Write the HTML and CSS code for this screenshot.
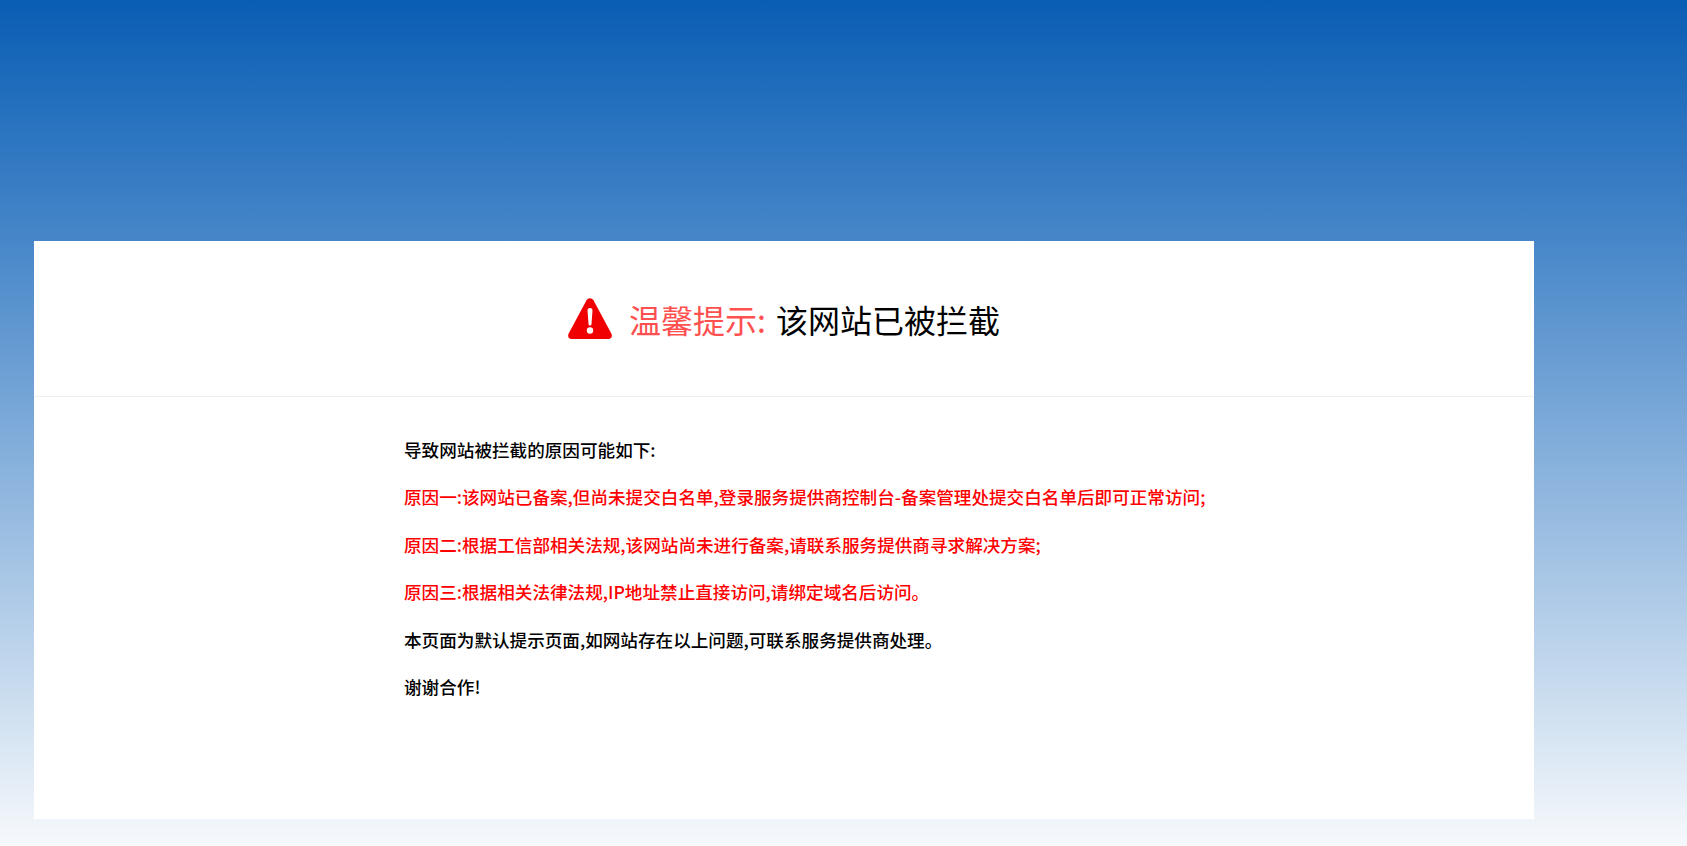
FILE: index.html
```html
<!DOCTYPE html>
<html lang="zh-CN">
<head>
<meta charset="utf-8">
<title>温馨提示</title>
<link rel="stylesheet" href="styles.css">
</head>
<body>
<main class="card">
  <header class="head">
    <svg class="warn" viewBox="0 0 44 41" width="44" height="41" aria-hidden="true">
      <path fill="#f00000" d="M18.500 2.200a4 4 0 0 1 7 0l17.800 33.300c1.300 2.600.2 5.500-2.800 5.500H3.500C.5 41-.6 38.100.7 35.500z"/>
      <path fill="#fff" d="M19.500 12.500a2.500 2.500 0 1 1 5 0l-1 13.500a1.500 1.500 0 0 1-3 0z"/>
      <circle fill="#fff" cx="22" cy="32.500" r="3.200"/>
    </svg>
    <h1 class="title"><span class="hint">温馨提示:</span><span class="msg">该网站已被拦截</span></h1>
  </header>
  <section class="body">
    <p>导致网站被拦截的原因可能如下:</p>
    <p class="red">原因一:该网站已备案,但尚未提交白名单,登录服务提供商控制台-备案管理处提交白名单后即可正常访问;</p>
    <p class="red">原因二:根据工信部相关法规,该网站尚未进行备案,请联系服务提供商寻求解决方案;</p>
    <p class="red">原因三:根据相关法律法规,IP地址禁止直接访问,请绑定域名后访问。</p>
    <p>本页面为默认提示页面,如网站存在以上问题,可联系服务提供商处理。</p>
    <p>谢谢合作!</p>
  </section>
</main>
</body>
</html>
```
FILE: styles.css
```css
html, body { margin: 0; height: 100%; }
body {
  box-sizing: border-box;
  height: 846px;
  overflow: hidden;
  padding: 241px 0 0 34px;
  background: linear-gradient(180deg, #095db4 0, #4787c9 241px, #f6f9fc 846px);
  font-family: "Noto Sans CJK SC", "Noto Sans", sans-serif;
}
.card {
  box-sizing: border-box;
  width: 1500px;
  height: 578px;
  background: #fff;
}
.head {
  box-sizing: border-box;
  height: 156px;
  border-bottom: 1px solid #eeeeee;
  display: flex;
  align-items: center;
  justify-content: center;
  gap: 17px;
}
.warn { flex: none; }
.title {
  margin: 0;
  font-size: 32px;
  font-weight: 400;
  line-height: 48px;
  color: #000;
  display: flex;
  gap: 10px;
}
.hint { color: #ff5050; }
.body { padding: 37px 0 0 370px; }
.body p {
  margin: 0 0 15.400px;
  font-size: 17.600px;
  line-height: 32px;
  font-weight: 500;
  color: #000;
}
.body p.red { color: #f00; }
```
